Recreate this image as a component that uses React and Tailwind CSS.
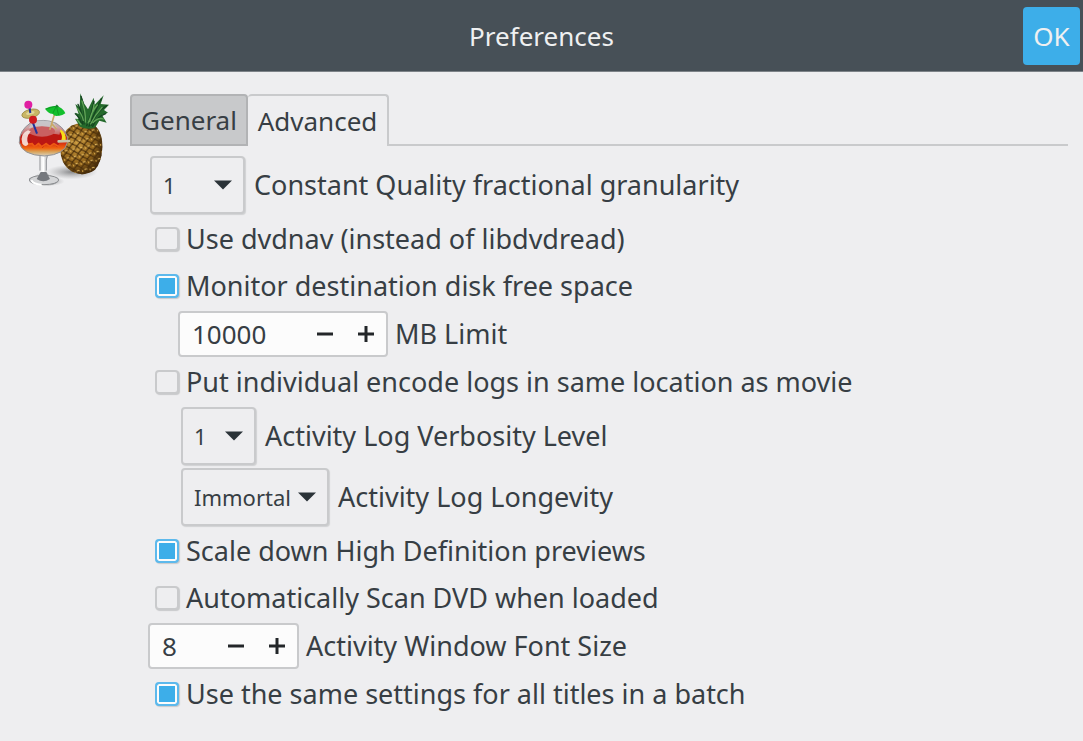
import React, { useState } from "react";

const Logo = () => (
  <svg viewBox="45 30 285 300" className="w-[95px] h-[100px] shrink-0" role="img" aria-label="HandBrake">
    <defs>
      <radialGradient id="fruit" cx="0.4" cy="0.4" r="0.65">
        <stop offset="0" stopColor="#c9993f" />
        <stop offset="0.6" stopColor="#93651b" />
        <stop offset="1" stopColor="#3c2408" />
      </radialGradient>
      <linearGradient id="drink" x1="0" y1="0" x2="0" y2="1">
        <stop offset="0" stopColor="#b9bcc0" />
        <stop offset="0.2" stopColor="#cfa0a2" />
        <stop offset="0.38" stopColor="#c96a6a" />
        <stop offset="0.42" stopColor="#bf1712" />
        <stop offset="0.62" stopColor="#d42a10" />
        <stop offset="0.78" stopColor="#f0640f" />
        <stop offset="0.88" stopColor="#d9a35a" />
        <stop offset="1" stopColor="#d8d0bd" />
      </linearGradient>
      <linearGradient id="stem" x1="0" y1="0" x2="1" y2="0">
        <stop offset="0" stopColor="#8f9296" />
        <stop offset="0.4" stopColor="#f7f7f7" />
        <stop offset="1" stopColor="#84878b" />
      </linearGradient>
      <radialGradient id="shade">
        <stop offset="0" stopColor="#6f7072" stopOpacity="0.8" />
        <stop offset="1" stopColor="#9a9b9d" stopOpacity="0" />
      </radialGradient>
      <pattern id="scales" width="23" height="22" patternUnits="userSpaceOnUse" patternTransform="rotate(-12)">
        <path d="M0 0 Q8 12 23 22 M23 0 Q15 12 0 22" stroke="#4a2e0a" strokeWidth="3" fill="none" />
        <path d="M8 9 Q12 3 16 9" stroke="#e0b75d" strokeWidth="3" fill="none" />
        <circle cx="1" cy="11" r="3" fill="#d1a245" />
      </pattern>
    </defs>

    {/* Shadow */}
    <ellipse cx="215" cy="276" rx="78" ry="22" fill="url(#shade)" />
    <ellipse cx="140" cy="304" rx="54" ry="15" fill="url(#shade)" />

    {/* Pineapple */}
    <path d="M214 137 Q247 121 285 137 Q308 157 307 203 Q305 246 285 269 Q249 293 214 274 Q181 252 181 206 Q183 157 214 137Z" fill="url(#fruit)" />
    <path d="M214 137 Q247 121 285 137 Q308 157 307 203 Q305 246 285 269 Q249 293 214 274 Q181 252 181 206 Q183 157 214 137Z" fill="url(#scales)" />
    <path d="M240 140 L225 116 L236 117 L226 98 L236 102 L226 72 L239 82 L241 40 L251 68 L264 88 L281 53 L284 74 L311 46 L302 72 L327 74 L312 90 L324 98 L306 105 L320 128 L298 122 L285 143 Q262 151 240 140Z" fill="#256a2c" />
    <path d="M247 132 Q249 101 234 73 M252 132 Q256 80 243 49 M260 137 Q275 103 282 64 M267 139 Q287 91 304 56 M274 136 Q287 96 320 77 M278 139 Q289 111 317 101 M243 128 Q240 113 226 101" stroke="#154520" strokeWidth="4" fill="none" strokeLinecap="round" />
    <path d="M256 126 Q258 99 246 63 M264 129 Q279 99 282 74 M272 132 Q285 105 306 82 M250 121 Q247 105 232 86 M279 128 Q295 111 310 117 M243 134 L231 119 M269 124 Q272 98 292 75" stroke="#62a557" strokeWidth="4" fill="none" strokeLinecap="round" />

    {/* Glass */}
    <path d="M118 224 H144 L138 240 L138 270 Q140 287 174 294 Q181 306 159 314 Q130 321 101 313 Q83 304 88 295 Q119 285 121 271 V241Z" fill="url(#stem)" />
    <ellipse cx="132" cy="300" rx="44" ry="14" fill="#d4d5d7" stroke="#8b8d90" strokeWidth="3" />
    <path d="M122 276 H139 L150 297 Q130 311 110 297Z" fill="#75787d" />
    <path d="M120 228 V272 M142 228 L139 240 V272" stroke="#8f9195" strokeWidth="3" fill="none" />
    <path d="M130 228 V276 M94 301 Q101 314 125 314" stroke="#ffffff" strokeWidth="6" fill="none" />
    <path d="M91 129 Q129 113 169 130 Q207 155 202 188 Q195 224 133 228 Q66 225 58 188 Q56 153 91 129Z" fill="url(#drink)" stroke="#929397" strokeWidth="3" />
    <path d="M84 163 Q127 151 185 167 L190 185 L178 188 L172 202 L160 188 L148 198 L139 187 L128 204 L117 187 L105 201 L97 187 L86 196 L75 180Z" fill="#bb1713" />
    <path d="M81 193 L96 191 L104 200 L115 191 L125 200 L138 191 L150 199 L162 191 L178 201" stroke="#ee5a14" strokeWidth="5" fill="none" />
    <ellipse cx="126" cy="154" rx="39" ry="16" fill="#c96061" />
    <path d="M96 128 Q124 115 162 128 L171 145 Q123 132 86 145Z" fill="#c9cacd" fillOpacity="0.8" />
    <path d="M84 151 Q58 161 67 191 Q77 204 85 192 Q76 174 92 154Z" fill="#f7e6df" fillOpacity="0.9" />

    {/* Cocktail stick */}
    <path d="M88 77 L93 113 L111 161" stroke="#20329b" strokeWidth="6" fill="none" />
    <ellipse cx="92" cy="101" rx="27" ry="13" fill="#c8b665" stroke="#8e7b36" strokeWidth="2" transform="rotate(-13 92 101)" />
    <ellipse cx="91" cy="99" rx="13" ry="5" fill="#e0d59b" transform="rotate(-13 91 99)" />
    <path d="M89 86 L91 99" stroke="#20329b" strokeWidth="6" />
    <circle cx="85" cy="74" r="12" fill="#e01fa2" />
    <circle cx="99" cy="119" r="12" fill="#cf1b20" />

    {/* Umbrella */}
    <path d="M166 94 L154 135 L149 149 M154 130 L170 147" stroke="#c8a967" strokeWidth="5" fill="none" />
    <path d="M135 86 Q153 76 169 78 Q188 82 196 100 Q185 109 174 107 Q164 110 158 101 Q147 103 135 86Z" fill="#13bf2c" />
    <path d="M169 78 L158 101 M169 78 L176 106 M169 78 L137 87" stroke="#0a8a20" strokeWidth="2" />
    <path d="M169 75 L175 81" stroke="#167927" strokeWidth="4" />

    {/* Lemon slice */}
    <path d="M181 148 Q199 158 197 181 L180 180Z" fill="#f7df18" />
    <path d="M180 155 Q189 166 184 181 H176Z" fill="#c1150f" />
    <path d="M176 184 L207 183" stroke="#c9c2aa" strokeWidth="8" strokeLinecap="round" />
  </svg>
);

const CheckRow = ({ label, defaultChecked = false }) => (
  <label className="flex items-center gap-[7px] h-[44px] pl-[7px]">
    <input
      type="checkbox"
      defaultChecked={defaultChecked}
      className="appearance-none w-6 h-6 shrink-0 rounded-[4px] border-2 border-[#c9cacc] bg-[#eeeef0] shadow-[1px_1px_1px_#c8c9cb] checked:border-[#5db9ec] checked:bg-[#3daee9] checked:shadow-[inset_0_0_0_2px_#fcfcfc,1px_1px_1px_#c8c9cb]"
    />
    <span>{label}</span>
  </label>
);

const SelectRow = ({ id, label, options, width, className = "" }) => (
  <div className={`flex items-center gap-[9px] ${className}`}>
    <div className={`grid items-center h-[58px] ${width}`}>
      <select
        id={id}
        className="col-start-1 row-start-1 appearance-none w-full h-full pl-[11px] text-[22px] rounded-[4px] border-2 border-[#c9cacc] bg-[#eeeef0] shadow-[1px_1px_1px_#d0d1d3]"
      >
        {options.map((o) => (
          <option key={o}>{o}</option>
        ))}
      </select>
      <svg viewBox="0 0 18 10" className="col-start-1 row-start-1 justify-self-end w-[18px] h-[10px] mr-[13px] pointer-events-none">
        <path d="M0 0.5H18L9 9.5Z" fill="#2b3338" />
      </svg>
    </div>
    <label htmlFor={id}>{label}</label>
  </div>
);

const SpinRow = ({ id, label, initial, width, className = "" }) => {
  const [value, setValue] = useState(initial);

  return (
    <div className={`flex items-center gap-[7px] ${className}`}>
      <div className={`flex items-center h-[46px] rounded-[4px] border-2 border-[#c9cacc] bg-[#fcfcfc] ${width}`}>
        <input
          id={id}
          type="text"
          inputMode="numeric"
          value={value}
          onChange={(e) => setValue(Number(e.target.value) || 0)}
          className="flex-1 min-w-0 h-full pl-3 text-[26px] bg-transparent outline-none"
        />
        <button type="button" aria-label="Decrease" onClick={() => setValue(value - 1)} className="flex items-center justify-center w-[41px] h-full">
          <svg viewBox="0 0 16 16" className="w-4 h-4">
            <path d="M0 8H16" stroke="#232629" strokeWidth="3" />
          </svg>
        </button>
        <button type="button" aria-label="Increase" onClick={() => setValue(value + 1)} className="flex items-center justify-center w-[41px] h-full">
          <svg viewBox="0 0 16 16" className="w-4 h-4">
            <path d="M0 8H16M8 0V16" stroke="#232629" strokeWidth="3" />
          </svg>
        </button>
      </div>
      <label htmlFor={id}>{label}</label>
    </div>
  );
};

const App = () => {
  return (
    <div className="min-h-screen bg-[#eeeef0] text-[#373e44] text-[27px] leading-9 font-['Noto_Sans',sans-serif]">
      {/* Title bar */}
      <header className="grid grid-cols-[1fr_auto_1fr] items-center h-[72px] px-[3px] bg-[#475057] border-b border-[#7d8388] text-[26px] text-[#eff0f1]">
        <h1 className="col-start-2">Preferences</h1>
        <button type="button" className="justify-self-end w-[57px] h-[58px] rounded-[4px] bg-[#3daee9]">
          OK
        </button>
      </header>

      <main className="flex items-start gap-[20px] pl-[15px] pr-[15px] pt-[18px]">
        <Logo />

        <div className="flex-1 min-w-0 pt-1">
          {/* Tabs */}
          <div role="tablist" className="flex h-[52px] text-[26px]">
            <button type="button" role="tab" aria-selected="false" className="w-[118px] rounded-t-[4px] border-2 border-[#b2b3b5] bg-[#c8c9cb]">
              General
            </button>
            <button type="button" role="tab" aria-selected="true" className="w-[141px] rounded-t-[4px] border-2 border-l-0 border-b-0 border-[#c9cacc]">
              Advanced
            </button>
            <div className="flex-1 border-b-2 border-[#c9cacc]" />
          </div>

          {/* Advanced */}
          <form className="flex flex-col gap-[3px] pt-[10px] pl-[18px]">
            <SelectRow id="granularity" label="Constant Quality fractional granularity" options={["1", "0.5", "0.25", "0.2"]} width="w-[95px]" className="pl-[2px]" />
            <CheckRow label="Use dvdnav (instead of libdvdread)" />
            <CheckRow label="Monitor destination disk free space" defaultChecked />
            <SpinRow id="limit" label="MB Limit" initial={10000} width="w-[210px]" className="pl-[30px]" />
            <CheckRow label="Put individual encode logs in same location as movie" />
            <SelectRow id="verbosity" label="Activity Log Verbosity Level" options={["1", "0", "2"]} width="w-[75px]" className="pl-[33px]" />
            <SelectRow id="longevity" label="Activity Log Longevity" options={["Immortal", "Week", "Month", "Year"]} width="w-[148px]" className="pl-[33px]" />
            <CheckRow label="Scale down High Definition previews" defaultChecked />
            <CheckRow label="Automatically Scan DVD when loaded" />
            <SpinRow id="fontsize" label="Activity Window Font Size" initial={8} width="w-[151px]" />
            <CheckRow label="Use the same settings for all titles in a batch" defaultChecked />
          </form>
        </div>
      </main>
    </div>
  );
};

export default App;
